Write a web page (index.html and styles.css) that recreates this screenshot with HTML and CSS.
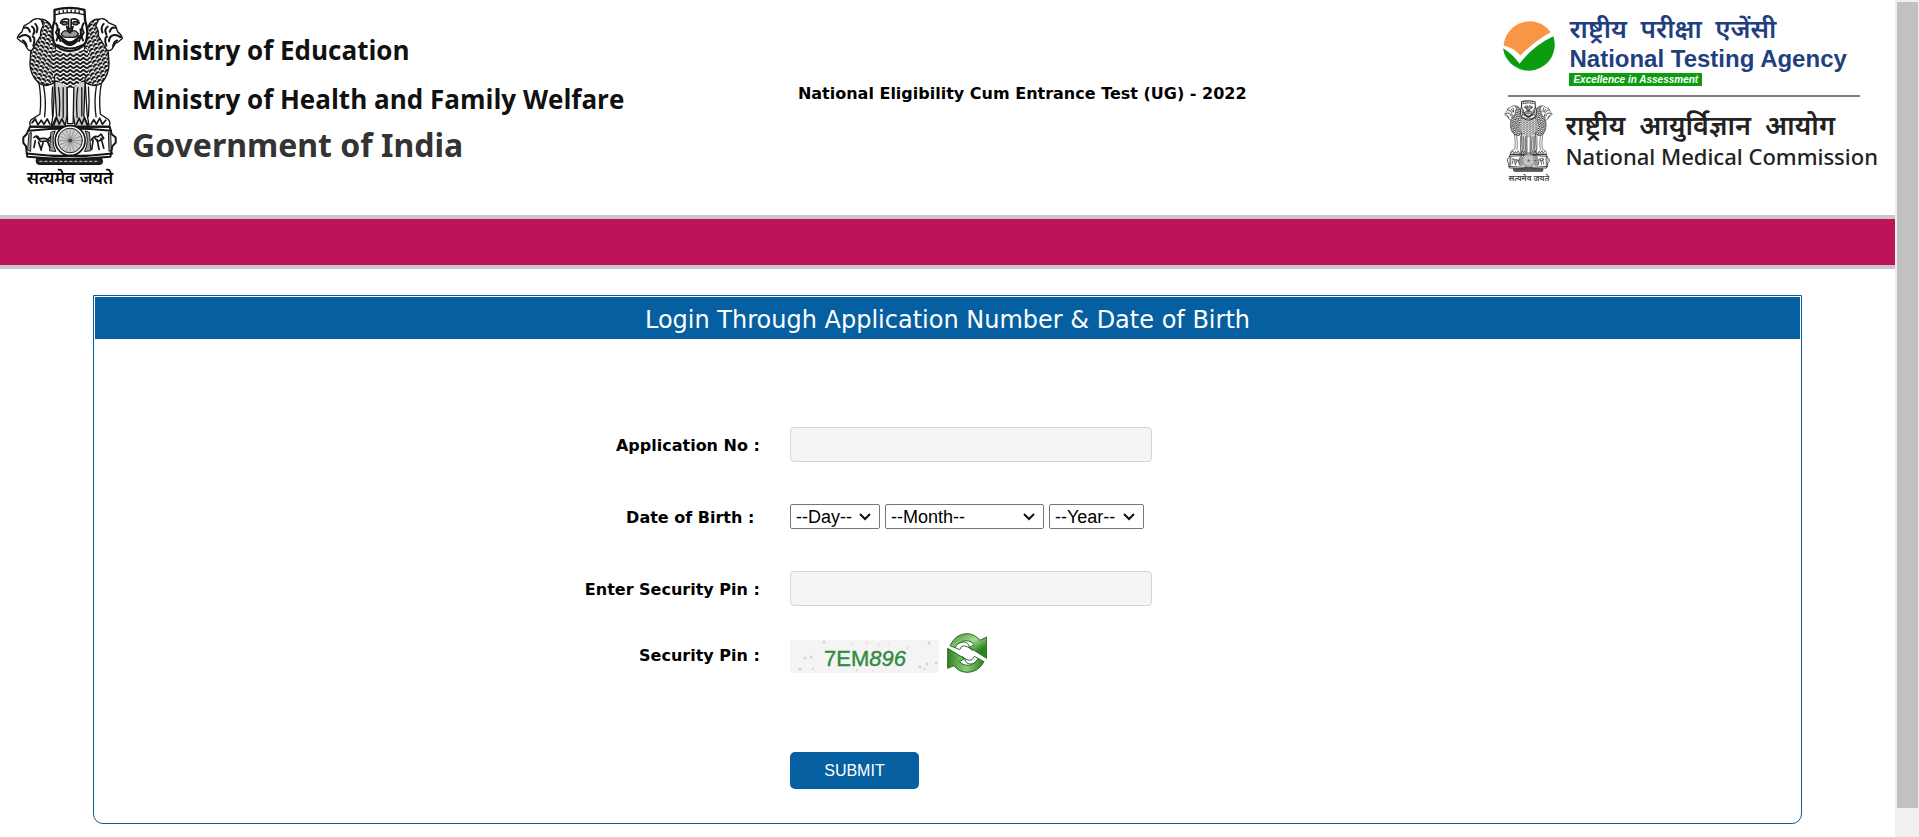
FILE: index.html
```html
<!DOCTYPE html>
<html lang="en">
<head>
<meta charset="utf-8">
<meta name="viewport" content="width=device-width, initial-scale=1">
<title>National Eligibility Cum Entrance Test (UG) - 2022</title>
<link rel="stylesheet" href="styles.css">
</head>
<body>
<svg class="sprite" aria-hidden="true">
  <defs>
    <pattern id="scalesLeft" width="15" height="12" patternUnits="userSpaceOnUse" patternTransform="rotate(14)">
      <rect width="15" height="12" fill="#fff"/>
      <path d="M0 2 Q8 2 15 10 M6 0 V4" stroke="#111" stroke-width="6" fill="none"/>
    </pattern>
    <pattern id="scalesRight" width="15" height="12" patternUnits="userSpaceOnUse" patternTransform="rotate(-14)">
      <rect width="15" height="12" fill="#fff"/>
      <path d="M15 2 Q7 2 0 10 M9 0 V4" stroke="#111" stroke-width="6" fill="none"/>
    </pattern>
    <pattern id="scalesMid" x="203" width="20" height="12" patternUnits="userSpaceOnUse">
      <rect width="20" height="12" fill="#fff"/>
      <path d="M-1 11 L10 2 L21 11" stroke="#111" stroke-width="5.5" fill="none"/>
    </pattern>
  </defs>
  <symbol id="emblem" viewBox="50 15 325 480">
    <g stroke="#151515" stroke-width="4" stroke-linejoin="round" stroke-linecap="round" fill="#fff">
      <path d="M118 240 Q128 290 122 340 L96 356 Q88 366 94 376 H156 L162 340 L166 240Z"/>
      <path d="M308 240 Q298 290 304 340 L328 356 Q336 366 330 376 H270 L264 340 L258 240Z"/>
      <path d="M166 240 L172 345 L158 376 H198 L204 340 V245Z M258 240 L254 345 L268 376 H228 L222 340 V245Z" fill="#ccc"/>
      <path d="M204 258 H224 L222 368 H205Z"/>
      <path d="M133 255 Q142 300 136 348 M160 258 Q156 300 160 346 M178 260 Q184 300 180 345 M192 260 V350 M236 260 Q230 300 234 350 M248 260 V345 M268 258 Q272 305 268 346 M292 255 Q284 300 291 348" fill="none" stroke-width="4"/>
      <path d="M98 366 l10 -12 8 18 10 -14 8 12 10 -16 8 16 M164 372 l8 -22 8 20 8 -16 8 16 M232 370 l8 -18 8 18 8 -20 8 22 M276 370 l8 -14 8 14 10 -18 8 18 10 -12" fill="none" stroke-width="5"/>
      <path d="M112 56 Q134 48 150 66 L170 100 L166 244 Q142 262 118 246 Q92 220 92 188 L96 128Z" fill="url(#scalesLeft)"/>
      <path d="M308 56 Q288 48 272 66 L256 100 L258 244 Q284 262 308 246 Q330 220 330 188 L326 128Z" fill="url(#scalesRight)"/>
      <path d="M92 64 Q108 46 126 56 L132 74 Q122 88 124 104 L98 148 Q86 150 82 138 L76 128 L66 122 L54 112 Q56 100 68 92 L74 74Z"/>
      <path d="M328 64 Q314 46 298 56 L290 74 Q300 88 298 104 L324 148 Q338 150 342 138 L348 128 L358 122 L370 112 Q368 100 356 92 L350 74Z"/>
      <path d="M74 80 q14 -4 18 12 M60 108 q14 -10 26 -4 q8 4 8 16 M70 118 q10 4 12 18 M98 76 q12 8 4 24 M108 68 q10 10 4 26 M100 106 q10 4 2 28 M350 80 q-14 -4 -18 12 M364 108 q-14 -10 -26 -4 q-8 4 -8 16 M354 118 q-10 4 -12 18 M326 76 q-12 8 -4 24 M314 68 q-10 10 -4 26 M324 106 q-10 4 -2 28" fill="none" stroke-width="6"/>
      <path d="M160 140 Q212 172 264 140 L274 200 Q250 250 214 262 Q176 250 152 200Z" fill="url(#scalesMid)" stroke="none"/>
      <path d="M166 26 Q212 14 256 26 L258 58 Q270 90 260 124 Q244 148 212 150 Q178 148 164 124 Q154 90 166 58Z" stroke-width="7"/>
      <path d="M170 40 Q212 28 254 40 M180 30 v8 M192 27 v8 M204 26 v8 M216 26 v8 M228 27 v8 M240 29 v8" fill="none"/>
      <path d="M184 66 Q186 50 208 54 L208 78 M240 66 Q238 50 216 54 L216 78" fill="none" stroke-width="5"/>
      <ellipse cx="196" cy="66" rx="8" ry="5" fill="#777"/><ellipse cx="229" cy="66" rx="8" ry="5" fill="#777"/>
      <path d="M202 76 L212 82 L222 76 L218 92 H206Z" fill="#333"/>
      <path d="M186 98 Q198 80 212 96 Q226 80 238 98 Q230 112 212 108 Q192 112 186 98Z" fill="#999"/>
      <path d="M184 106 Q212 142 240 106 M190 118 Q212 144 234 118" fill="none" stroke-width="8"/>
      <path d="M170 66 q10 14 0 28 q10 10 2 24 M180 84 q-4 18 4 36 M254 66 q-10 14 0 28 q-10 10 -2 24 M244 84 q4 18 -4 36 M176 132 q36 20 74 0" fill="none" stroke-width="6"/>
      <path d="M92 378 H332 L338 400 L350 410 V426 L340 436 L334 468 Q212 480 84 468 L80 436 L72 426 V410 L82 400Z" stroke-width="6"/>
      <path d="M92 378 H332 M88 390 Q212 376 336 390 M82 458 Q212 474 340 458" fill="none" stroke-width="6"/>
      <path d="M90 398 L96 394 L94 452 L86 448Z M334 398 L328 394 L330 452 L336 448Z M156 394 L168 390 Q154 420 170 452 L152 450Z M270 394 L258 390 Q272 420 256 452 L274 450Z" fill="#999" stroke-width="3"/>
      <path d="M104 410 q10 -10 16 4 q16 -4 26 2 l8 -8 M108 420 l-4 20 M118 424 l8 24 M132 424 l-6 20 M144 420 l8 20 M112 408 l12 14 26 -2 M276 418 q10 -16 20 -10 l10 -8 l8 12 M282 418 l-4 28 M294 416 l6 30 M306 412 l8 30 M286 410 l10 12 16 -8" fill="none" stroke-width="5"/>
      <circle cx="213" cy="419" r="45" stroke-width="5"/>
      <circle cx="213" cy="419" r="37" fill="#ccc" stroke-width="3"/>
      <path d="M213 384 V454 M178 419 H248 M188 394 L238 444 M188 444 L238 394 M200 386 L226 452 M180 406 L246 432 M226 386 L200 452 M246 406 L180 432" stroke="#777" stroke-width="2"/>
      <circle cx="213" cy="419" r="4" fill="#444" stroke="#444"/>
      <path d="M112 474 H308 Q314 490 300 491 H122 Q108 490 112 474Z" fill="#222"/>
      <path d="M122 482 H300" stroke="#aaa" stroke-width="4" stroke-dasharray="6 9"/>
    </g>
  </symbol>
</svg>
<div class="viewport">
  <div class="page">
    <header class="masthead">
      <div class="ministry">
        <div class="crest">
          <svg class="crest-art" role="img" aria-label="State Emblem of India"><use href="#emblem"/></svg>
          <span class="crest-motto" lang="hi">सत्यमेव जयते</span>
        </div>
        <div class="ministry-names">
          <p class="ministry-line">Ministry of Education</p>
          <p class="ministry-line">Ministry of Health and Family Welfare</p>
          <p class="government-line">Government of India</p>
        </div>
      </div>
      <h1 class="exam-title">National Eligibility Cum Entrance Test (UG) - 2022</h1>
      <div class="agencies">
        <div class="agency nta">
          <svg class="nta-logo" viewBox="0 0 156 158" role="img" aria-label="NTA">
            <path d="M2 76 A78 78 0 0 1 143 36 Q95 62 52 106 Q32 82 2 76Z" fill="#f79646"/>
            <path d="M0 84 Q28 100 50 131 Q88 78 151 48 A78 78 0 1 1 0 84Z" fill="#0b9c10"/>
          </svg>
          <div class="nta-names">
            <span class="nta-hindi" lang="hi">राष्ट्रीय&nbsp; परीक्षा&nbsp; एजेंसी</span>
            <span class="nta-english">National Testing Agency</span>
            <span class="nta-motto">Excellence in Assessment</span>
          </div>
        </div>
        <div class="agency nmc">
          <div class="crest crest-small">
            <svg class="crest-art" role="img" aria-label="State Emblem of India"><use href="#emblem"/></svg>
            <span class="crest-motto" lang="hi">सत्यमेव जयते</span>
          </div>
          <div class="nmc-names">
            <span class="nmc-hindi" lang="hi">राष्ट्रीय&nbsp; आयुर्विज्ञान&nbsp; आयोग</span>
            <span class="nmc-english">National Medical Commission</span>
          </div>
        </div>
      </div>
    </header>
    <div class="banner"></div>
    <main class="panel">
      <h2 class="panel-title">Login Through Application Number &amp; Date of Birth</h2>
      <form class="login">
        <label class="login-label" for="appno">Application No :</label>
        <input class="login-input" id="appno" type="text">
        <label class="login-label" for="day">Date of Birth :&nbsp;</label>
        <div class="dob">
          <select class="dob-select dob-day" id="day"><option>--Day--</option></select>
          <select class="dob-select dob-month" aria-label="Month"><option>--Month--</option></select>
          <select class="dob-select dob-year" aria-label="Year"><option>--Year--</option></select>
        </div>
        <label class="login-label" for="pin">Enter Security Pin :</label>
        <input class="login-input" id="pin" type="text">
        <span class="login-label captcha-label">Security Pin :</span>
        <div class="captcha">
          <svg class="captcha-image" viewBox="0 0 149 33" role="img" aria-label="Security pin image">
            <rect width="149" height="33" fill="#f4f4f4"/>
            <g fill="#d3d3d6">
              <circle cx="15" cy="18" r="1.5"/><circle cx="21" cy="17" r="1.5"/><circle cx="10" cy="29" r="1.5"/><circle cx="23" cy="29" r="1"/><circle cx="34" cy="2" r="1.5"/><circle cx="139" cy="3" r="1.5"/><circle cx="130" cy="27" r="1.5"/><circle cx="137" cy="24" r="1.5"/><circle cx="146" cy="23" r="1.5"/><circle cx="117" cy="8" r="1"/><circle cx="134" cy="29" r="1"/><circle cx="67" cy="30" r="1"/>
            </g>
            <g fill="#f8dff6">
              <circle cx="62" cy="4" r="2"/><circle cx="77" cy="3" r="2"/><circle cx="89" cy="5" r="2"/><circle cx="99" cy="3" r="1.5"/><circle cx="83" cy="30" r="1.5"/>
            </g>
            <text class="captcha-text" x="34" y="26">7EM<tspan font-style="italic">896</tspan></text>
          </svg>
          <button class="refresh" type="button" aria-label="Refresh security pin">
            <svg class="refresh-icon" viewBox="0 0 120 120">
              <defs>
                <linearGradient id="leaf" x1="0" y1="0" x2="1" y2="1">
                  <stop offset="0" stop-color="#3c8f2a"/><stop offset=".45" stop-color="#a3d993"/><stop offset=".75" stop-color="#2f8220"/>
                </linearGradient>
                <linearGradient id="leafBack" x1="0" y1="0" x2="1" y2="0">
                  <stop offset="0" stop-color="#2f8220"/><stop offset=".5" stop-color="#8ccb7c"/><stop offset="1" stop-color="#2f8220"/>
                </linearGradient>
              </defs>
              <g stroke="#2c6b22" stroke-width="3" stroke-linejoin="round">
                <path d="M9 38 Q26 2 60 2 Q84 3 99 22 L119 12 V76 L67 43 L82 35 Q66 18 46 25 Q33 31 24 44Z" fill="url(#leaf)"/>
                <path d="M24 44 Q32 28 50 27 Q64 27 67 43 L78 52 L62 42 Q52 36 44 40 L38 50Z" fill="#fff"/>
                <path d="M111 86 Q94 118 60 118 Q34 117 21 98 L2 106 V46 L53 77 L37 86 Q54 102 74 95 Q86 90 93 76Z" fill="url(#leafBack)"/>
                <path d="M93 76 Q86 92 70 93 Q56 93 53 77 L43 70 L58 79 Q68 84 75 80 L82 70Z" fill="#fff"/>
              </g>
            </svg>
          </button>
        </div>
        <button class="submit" type="submit">SUBMIT</button>
      </form>
    </main>
  </div>
  <div class="scrollbar" aria-hidden="true"><div class="scrollbar-thumb"></div></div>
</div>
</body>
</html>
```
FILE: styles.css
```css
* { box-sizing: border-box; }

body {
  margin: 0;
  background: #fff;
  color: #000;
  font-family: "DejaVu Sans", sans-serif;
}

p, h1, h2 { margin: 0; }

.sprite {
  position: absolute;
  width: 0;
  height: 0;
}

.viewport {
  display: flex;
  min-height: 100vh;
}

.page { flex: 1; min-width: 0; }

.scrollbar {
  width: 24px;
  padding: 2px 1px 29px 2px;
  background: #f0f0f0;
  display: flex;
}

.scrollbar-thumb { flex: 1; background: #c1c1c1; }

.masthead {
  display: grid;
  grid-template-columns: 42% 1fr auto;
  min-height: 215px;
}

.ministry {
  display: flex;
  gap: 8px;
  padding: 6px 0 0 16px;
  align-items: flex-start;
}

.crest {
  display: flex;
  flex-direction: column;
  align-items: center;
  width: 108px;
}

.crest-art { width: 108px; height: 160px; }

.crest-motto {
  font: 600 17px/24px "Noto Sans", sans-serif;
  white-space: nowrap;
}

.ministry-names {
  padding-top: 20px;
  white-space: nowrap;
}

.ministry-line {
  font: bold 26px/49px "Open Sans", "Noto Sans", sans-serif;
  color: #111;
}

.government-line {
  font: bold 32px/42px "Noto Sans", sans-serif;
  color: #333;
}

.exam-title {
  padding: 84px 0 0 2px;
  font-size: 16px;
  line-height: 20px;
  white-space: nowrap;
}

.agencies {
  padding: 12px 17px 0 0;
  white-space: nowrap;
}

.agency { display: flex; }

.nta {
  gap: 14px;
  height: 83px;
  padding-left: 2px;
}

.nta-logo { width: 52px; height: 53px; margin-top: 8px; }

.nta-names, .nmc-names {
  display: flex;
  flex-direction: column;
  align-items: flex-start;
}

.nta-hindi {
  font: 600 26px/32px "Noto Sans", sans-serif;
  color: #1f3f80;
}

.nta-english {
  font: bold 24px/29px "Liberation Sans", sans-serif;
  color: #1f3f80;
}

.nta-motto {
  padding: 0 4px;
  background: #0b9c10;
  color: #fff;
  font: italic bold 10px/13px "Liberation Sans", sans-serif;
}

.nmc {
  position: relative;
  gap: 12px;
  padding: 5px 0 0 3px;
}

.nmc::before {
  content: "";
  position: absolute;
  top: 0;
  left: 7px;
  right: 18px;
  height: 2px;
  background: #808080;
}

.crest-small { width: 49px; }
.crest-small .crest-art { width: 49px; height: 72px; opacity: .85; }
.crest-small .crest-motto { font-size: 8px; line-height: 12px; color: #444; }

.nmc-names { padding-top: 8px; }

.nmc-hindi {
  font: 600 27px/34px "Noto Sans", sans-serif;
  color: #222;
}

.nmc-english {
  font: 500 22px/28px "Noto Sans", sans-serif;
  color: #222;
}

.banner {
  height: 54px;
  border: solid #c8c8c8;
  border-width: 4px 0;
  background: #bd1358;
}

.panel {
  margin: 26px 93px 12px;
  padding: 1px 1px 34px;
  border: 1px solid #065fa1;
  border-radius: 0 0 10px 10px;
}

.panel-title {
  padding-top: 4px;
  background: #065fa1;
  color: #fff;
  font-size: 24px;
  font-weight: normal;
  line-height: 38px;
  text-align: center;
}

.login {
  display: grid;
  grid-template-columns: 39% 1fr;
  column-gap: 30px;
  row-gap: 42px;
  align-items: center;
  justify-items: start;
  padding-top: 88px;
}

.login-label {
  justify-self: end;
  padding-top: 2px;
  font-size: 16px;
  font-weight: bold;
  line-height: 20px;
}

.login-input {
  width: 362px;
  height: 35px;
  padding: 4px 8px;
  border: 1px solid #d5d5d5;
  border-radius: 4px;
  background: #f4f4f4;
  font: 16px "Liberation Sans", sans-serif;
}

.dob { display: flex; gap: 5px; }

.dob-select {
  height: 25px;
  padding: 0 5px;
  appearance: none;
  border: 1px solid #767676;
  border-radius: 2px;
  background: #fff url("data:image/svg+xml,%3Csvg xmlns='http://www.w3.org/2000/svg' width='12' height='8'%3E%3Cpath d='M1 1L6 6L11 1' fill='none' stroke='%23111' stroke-width='2'/%3E%3C/svg%3E") no-repeat right 8px center;
  color: #000;
  font: 18px "Liberation Sans", sans-serif;
}

.dob-day { width: 90px; }
.dob-month { width: 159px; }
.dob-year { width: 95px; }

.captcha {
  display: flex;
  align-items: flex-end;
  gap: 8px;
  margin-top: -15px;
}

.captcha-label { margin-top: -12px; }

.captcha-image { width: 149px; height: 33px; }

.captcha-text {
  font: 22px "Liberation Sans", sans-serif;
  fill: #2f8b3f;
  stroke: #2f8b3f;
  stroke-width: 0.4;
}

.refresh {
  padding: 0;
  border: 0;
  background: none;
}

.refresh-icon { display: block; width: 40px; height: 40px; }

.submit {
  grid-column: 2;
  width: 129px;
  height: 37px;
  margin-top: 37px;
  border: 0;
  border-radius: 5px;
  background: #065fa1;
  color: #fff;
  font: 16px "Liberation Sans", sans-serif;
}
```
